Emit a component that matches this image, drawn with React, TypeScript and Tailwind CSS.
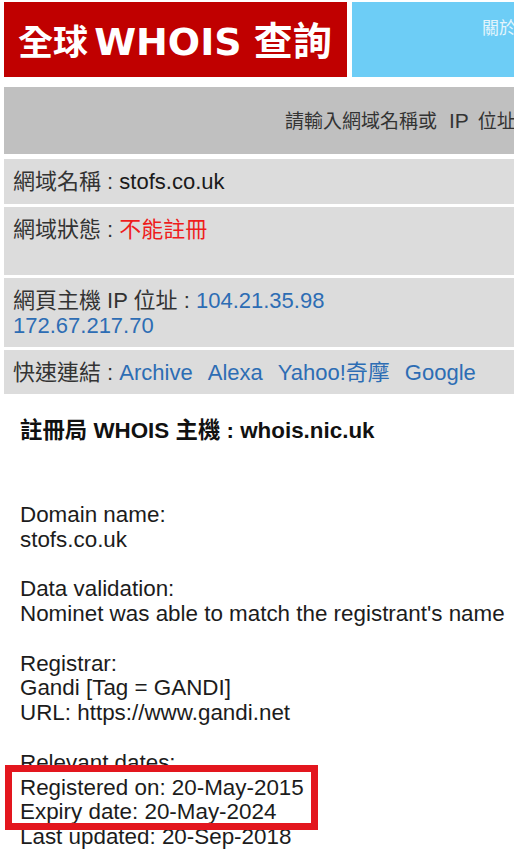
const bodyLines: (string | null)[] = [
  "Domain name:",
  "stofs.co.uk",
  null,
  "Data validation:",
  "Nominet was able to match the registrant's name",
  null,
  "Registrar:",
  "Gandi [Tag = GANDI]",
  "URL: https://www.gandi.net",
  null,
  "Relevant dates:",
];

function Line({ text }: { text: string | null }) {
  if (text === null) return <div className="h-[24.8px]" />;
  return <div className="h-[24.8px] whitespace-nowrap leading-[24.8px]">{text}</div>;
}

function InfoRow({ children, height }: { children: React.ReactNode; height: string }) {
  return (
    <div className={`bg-[#dcdcdc] pt-[10px] pl-[9px] text-[22px] leading-[25px] text-[#333] ${height}`}>
      {children}
    </div>
  );
}

export default function App() {
  return (
    <div className="h-[856px] w-[514px] overflow-hidden bg-white font-['Liberation_Sans','Noto_Sans_CJK_TC',sans-serif]">
      <div className="w-[760px] pl-[4px] pt-[2px]">
        {/* Top banner */}
        <header className="flex h-[75px] gap-[5px]">
          <div className="flex w-[343px] shrink-0 items-center bg-[#c00000] pl-[14px] text-white">
            <h1 className="whitespace-nowrap text-[22px] leading-none">
              <span className="font-['Noto_Sans_CJK_TC',sans-serif] text-[35px] font-bold">全球</span>{" "}
              <span className="font-['DejaVu_Sans',sans-serif] text-[38px] font-bold">WHOIS</span>{" "}
              <span className="ml-[6px] font-['Noto_Sans_CJK_TC',sans-serif] text-[39px] font-bold">查詢</span>
            </h1>
          </div>
          <nav className="flex-1 bg-[#6dcdf6] pl-[130px] pt-[17px] text-[17px] leading-[20px] text-[#e4f5fc]">
            關於我們　　聯絡我們
          </nav>
        </header>

        {/* Search prompt */}
        <div className="mt-[10px] flex h-[67px] items-center bg-[#c0c0c0] pl-[281px] text-[19px] text-[#333]">
          <p className="whitespace-nowrap">
            請輸入網域名稱或<span className="ml-[12px] mr-[9px] text-[21px]">IP</span>位址進行查詢
          </p>
        </div>

        {/* Summary rows */}
        <div className="mt-[5px] flex w-[510px] flex-col gap-[3px]">
          <InfoRow height="h-[45px]">
            網域名稱 : <span className="text-[#1a1a1a]">stofs.co.uk</span>
          </InfoRow>
          <InfoRow height="h-[68px]">
            網域狀態 : <span className="text-[#ee1c1c]">不能註冊</span>
          </InfoRow>
          <InfoRow height="h-[69px]">
            網頁主機 IP 位址 : <span className="text-[#2d6db4]">104.21.35.98</span>
            <br />
            <span className="text-[#2d6db4]">172.67.217.70</span>
          </InfoRow>
          <InfoRow height="h-[44px]">
            快速連結 : <span className="text-[#2d6db4]">Archive</span>
            <span className="ml-[15px] text-[#2d6db4]">Alexa</span>
            <span className="ml-[15px] text-[#2d6db4]">Yahoo!奇摩</span>
            <span className="ml-[15px] text-[#2d6db4]">Google</span>
          </InfoRow>
        </div>

        {/* Raw WHOIS */}
        <section className="px-[16px] pt-[25px] text-[22.4px] text-[#1c1c1c]">
          <div className="leading-[24.8px] font-bold text-[#111]">註冊局 WHOIS 主機 : whois.nic.uk</div>
          <div className="mt-[59px]">
            {bodyLines.map((t, i) => (
              <Line key={i} text={t} />
            ))}
            <div className="relative">
              <Line text="Registered on: 20-May-2015" />
              <Line text="Expiry date: 20-May-2024" />
              <div className="absolute left-[-15px] top-[-11px] h-[65px] w-[313px] border-[7px] border-[#e3161e]" />
            </div>
            <Line text="Last updated: 20-Sep-2018" />
          </div>
        </section>
      </div>
    </div>
  );
}
